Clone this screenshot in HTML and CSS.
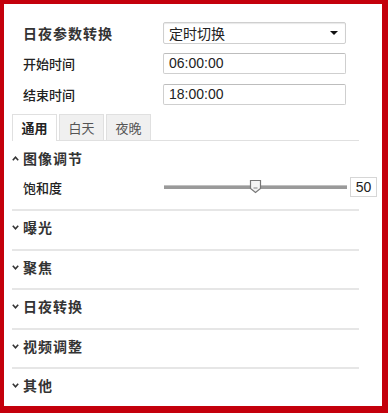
FILE: index.html
```html
<!DOCTYPE html>
<html lang="zh">
<head>
  <meta charset="UTF-8" />
  <title>图像参数</title>
  <link rel="stylesheet" href="styles.css">
</head>
<body>
<div class="frame">
  <div class="form">
    <div class="row">
      <span class="label strong">日夜参数转换</span>
      <div class="select">定时切换<span class="arrow"></span></div>
    </div>
    <div class="row">
      <span class="label">开始时间</span>
      <div class="input">06:00:00</div>
    </div>
    <div class="row">
      <span class="label">结束时间</span>
      <div class="input">18:00:00</div>
    </div>
  </div>

  <div class="tabs">
    <div class="tab active">通用</div>
    <div class="tab">白天</div>
    <div class="tab">夜晚</div>
  </div>

  <div class="sections">
    <div class="section first open">
      <div class="head">
        <svg class="caret" width="7" height="5" viewBox="0 0 7 5"><polyline points="0.8,4.2 3.5,1.2 6.2,4.2" fill="none" stroke="#333" stroke-width="1.6"/></svg>
        图像调节
      </div>
      <div class="item">
        <span class="label">饱和度</span>
        <div class="slider">
          <div class="track"></div>
          <svg class="thumb" width="13" height="15" viewBox="0 0 13 15"><path d="M1.5 1.5 H11.5 V9.5 L6.5 13.5 L1.5 9.5 Z" fill="#f4f4f4" stroke="#777" stroke-width="1.2"/><rect x="4.5" y="8" width="4" height="2" fill="#bbb"/></svg>
        </div>
        <div class="value">50</div>
      </div>
    </div>
    <div class="section">
      <div class="head"><svg class="caret" width="7" height="5" viewBox="0 0 7 5"><polyline points="0.8,0.8 3.5,3.8 6.2,0.8" fill="none" stroke="#333" stroke-width="1.6"/></svg>曝光</div>
    </div>
    <div class="section">
      <div class="head"><svg class="caret" width="7" height="5" viewBox="0 0 7 5"><polyline points="0.8,0.8 3.5,3.8 6.2,0.8" fill="none" stroke="#333" stroke-width="1.6"/></svg>聚焦</div>
    </div>
    <div class="section">
      <div class="head"><svg class="caret" width="7" height="5" viewBox="0 0 7 5"><polyline points="0.8,0.8 3.5,3.8 6.2,0.8" fill="none" stroke="#333" stroke-width="1.6"/></svg>日夜转换</div>
    </div>
    <div class="section">
      <div class="head"><svg class="caret" width="7" height="5" viewBox="0 0 7 5"><polyline points="0.8,0.8 3.5,3.8 6.2,0.8" fill="none" stroke="#333" stroke-width="1.6"/></svg>视频调整</div>
    </div>
    <div class="section">
      <div class="head"><svg class="caret" width="7" height="5" viewBox="0 0 7 5"><polyline points="0.8,0.8 3.5,3.8 6.2,0.8" fill="none" stroke="#333" stroke-width="1.6"/></svg>其他</div>
    </div>
  </div>
</div>
</body>
</html>
```

FILE: styles.css
```css
body {
  margin: 0;
  background: #1a0000;
  font-family: "Liberation Sans", "Noto Sans CJK SC", sans-serif;
  color: #222;
}

.frame {
  box-sizing: border-box;
  width: 388px;
  height: 413px;
  background: #fff;
  border: 4px solid #c4000c;
  border-right-width: 6px;
  border-bottom-width: 7px;
  overflow: hidden;
}

.form {
  padding: 13px 0 0 19px;
}

.row {
  display: flex;
  align-items: center;
  height: 31px;
}

.label {
  width: 140px;
  font-size: 13px;
  font-family: "Noto Sans CJK SC", sans-serif;
  font-weight: 500;
  color: #222;
}

.label.strong {
  font-size: 14px;
  font-weight: bold;
  letter-spacing: 1px;
  color: #333;
}

.select, .input {
  box-sizing: border-box;
  width: 183px;
  height: 22px;
  border: 1px solid #cfcfcf;
  border-radius: 2px;
  padding-left: 5px;
  font-size: 14px;
  line-height: 20px;
  position: relative;
}

.select {
  font-family: "Noto Sans CJK SC", sans-serif;
  box-shadow: inset 0 1px 1px #e8e8e8;
}

.input {
  height: 21px;
  line-height: 19px;
  border-top-color: #bdbdbd;
}

.arrow {
  position: absolute;
  right: 7px;
  top: 8px;
  border-left: 4px solid transparent;
  border-right: 4px solid transparent;
  border-top: 4px solid #111;
}

.tabs {
  display: flex;
  gap: 2px;
  margin: 3px 23px 0 8px;
  padding-top: 1px;
  border-bottom: 1px solid #e0e0e0;
}

.tab {
  width: 43px;
  height: 25px;
  line-height: 25px;
  text-align: center;
  font-family: "Noto Sans CJK SC", sans-serif;
  font-size: 13px;
  color: #555;
  background: #f0f0f0;
  border: 1px solid #e0e0e0;
  border-bottom: none;
}

.tab.active {
  background: #fff;
  color: #222;
  font-weight: bold;
  margin-bottom: -1px;
  height: 26px;
}

.sections {
  margin: 0 23px 0 8px;
}

.section {
  border-top: 2px solid #e6e6e6;
  height: 37.5px;
}

.section.first {
  border-top: none;
  height: auto;
}

.head {
  display: flex;
  align-items: center;
  gap: 4px;
  height: 32px;
  font-family: "Noto Sans CJK SC", sans-serif;
  font-size: 14px;
  font-weight: bold;
  letter-spacing: 1px;
  color: #333;
}

.section.first .head {
  height: 34px;
}

.caret {
  margin-top: 1px;
}

.item {
  display: flex;
  align-items: center;
  height: 24px;
  padding: 0 0 10px 11px;
}

.item .label {
  width: 141px;
}

.slider {
  position: relative;
  width: 183px;
  height: 16px;
}

.track {
  position: absolute;
  left: 0;
  right: 0;
  top: 6px;
  height: 4px;
  background: #9a9a9a;
  border-top: 1px solid #c0c0c0;
  box-sizing: border-box;
}

.thumb {
  position: absolute;
  left: 85px;
  top: 0;
}

.value {
  box-sizing: border-box;
  width: 27px;
  height: 20px;
  margin-left: 3px;
  border: 1px solid #d6d6d6;
  font-size: 14px;
  line-height: 18px;
  text-align: center;
  margin-right: -21px;
}
```
